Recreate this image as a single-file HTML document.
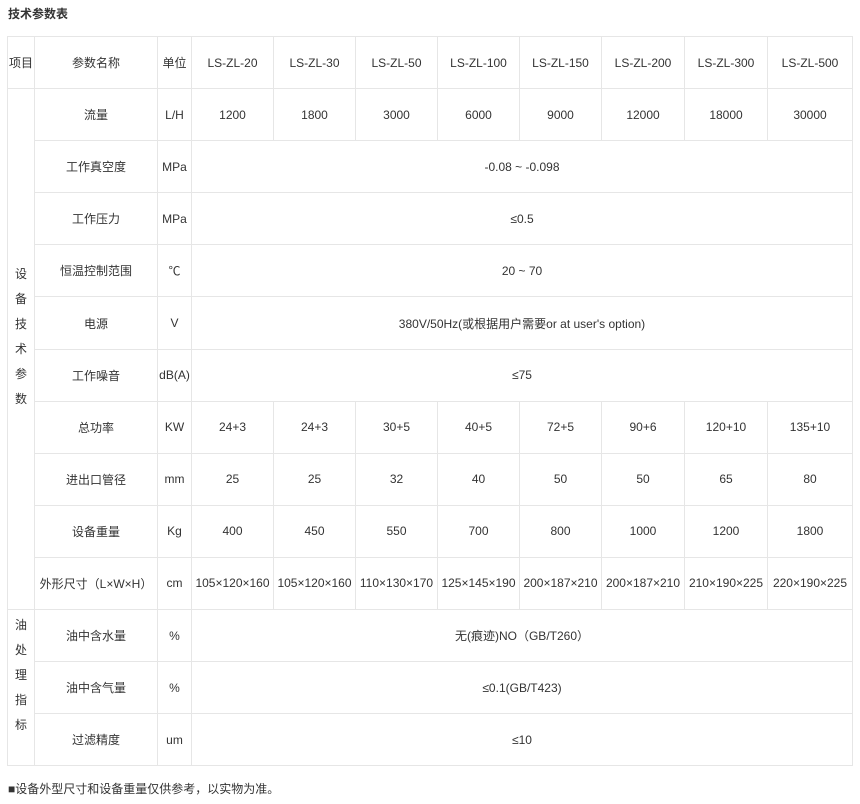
<!DOCTYPE html>
<html><head><meta charset="utf-8">
<style>
body{margin:0;background:#fff;width:860px;height:804px;overflow:hidden;font-family:"Liberation Sans","Noto Sans CJK SC",sans-serif;color:#333;font-size:12px;}
.title{position:absolute;left:8px;top:5px;font-weight:bold;font-size:12px;color:#333;}
table{position:absolute;left:7px;top:36px;border-collapse:collapse;table-layout:fixed;width:845px;}
td{border:1.5px solid #e6e6e6;text-align:center;height:51.1px;padding:0;font-size:12px;white-space:nowrap;}
.v{line-height:25px;vertical-align:middle;}
.foot{position:absolute;left:8px;top:780px;font-size:12px;}
</style></head><body>
<div class="title">技术参数表</div>
<table>
<colgroup><col style="width:27px"><col style="width:123px"><col style="width:34px"><col style="width:82px"><col style="width:82px"><col style="width:82px"><col style="width:82px"><col style="width:82px"><col style="width:83px"><col style="width:83px"><col style="width:85px"></colgroup>
<tr><td>项目</td><td>参数名称</td><td>单位</td><td>LS-ZL-20</td><td>LS-ZL-30</td><td>LS-ZL-50</td><td>LS-ZL-100</td><td>LS-ZL-150</td><td>LS-ZL-200</td><td>LS-ZL-300</td><td>LS-ZL-500</td></tr>
<tr><td rowspan="10" class="v"><div style="padding-bottom:25px">设<br>备<br>技<br>术<br>参<br>数</div></td><td>流量</td><td>L/H</td><td>1200</td><td>1800</td><td>3000</td><td>6000</td><td>9000</td><td>12000</td><td>18000</td><td>30000</td></tr>
<tr><td>工作真空度</td><td>MPa</td><td colspan="8">-0.08 ~ -0.098</td></tr>
<tr><td>工作压力</td><td>MPa</td><td colspan="8">≤0.5</td></tr>
<tr><td>恒温控制范围</td><td>℃</td><td colspan="8">20 ~ 70</td></tr>
<tr><td>电源</td><td>V</td><td colspan="8">380V/50Hz(或根据用户需要or at user's option)</td></tr>
<tr><td>工作噪音</td><td>dB(A)</td><td colspan="8">≤75</td></tr>
<tr><td>总功率</td><td>KW</td><td>24+3</td><td>24+3</td><td>30+5</td><td>40+5</td><td>72+5</td><td>90+6</td><td>120+10</td><td>135+10</td></tr>
<tr><td>进出口管径</td><td>mm</td><td>25</td><td>25</td><td>32</td><td>40</td><td>50</td><td>50</td><td>65</td><td>80</td></tr>
<tr><td>设备重量</td><td>Kg</td><td>400</td><td>450</td><td>550</td><td>700</td><td>800</td><td>1000</td><td>1200</td><td>1800</td></tr>
<tr><td>外形尺寸（L×W×H）</td><td>cm</td><td>105×120×160</td><td>105×120×160</td><td>110×130×170</td><td>125×145×190</td><td>200×187×210</td><td>200×187×210</td><td>210×190×225</td><td>220×190×225</td></tr>
<tr><td rowspan="3" class="v"><div style="padding-bottom:25px">油<br>处<br>理<br>指<br>标</div></td><td>油中含水量</td><td>%</td><td colspan="8">无(痕迹)NO（GB/T260）</td></tr>
<tr><td>油中含气量</td><td>%</td><td colspan="8">≤0.1(GB/T423)</td></tr>
<tr><td>过滤精度</td><td>um</td><td colspan="8">≤10</td></tr>
</table>
<div class="foot">■设备外型尺寸和设备重量仅供参考，以实物为准。</div>
</body></html>
